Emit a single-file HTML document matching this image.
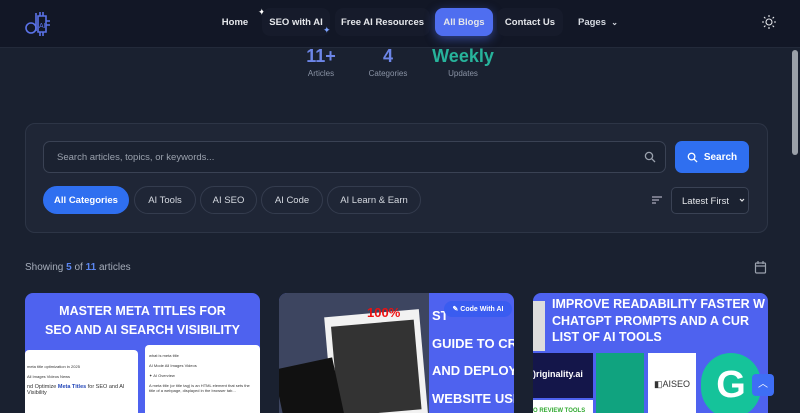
<!DOCTYPE html>
<html><head><meta charset="utf-8"><style>
*{box-sizing:border-box;margin:0;padding:0}
html,body{overflow:hidden}
body{width:800px;height:413px;background:#1a2130;font-family:"Liberation Sans",sans-serif;color:#e5e7eb;position:relative}
.hdr{position:absolute;left:0;top:0;width:800px;height:48px;background:#121726;border-bottom:1px solid #232a3a}
.nav{position:absolute;top:8px;height:28px;font-size:9.5px;font-weight:bold;color:#e5e7eb;display:flex;align-items:center;justify-content:center;border-radius:8px;white-space:nowrap}
.stat{position:absolute;text-align:center;font-size:8px;color:#8a93a5}
.stat b{display:block;font-size:18px;line-height:18px;margin-bottom:4px}
.panel{position:absolute;left:25px;top:123px;width:743px;height:110px;background:#1f2636;border:1px solid #2d3546;border-radius:10px}
.chip{position:absolute;top:186px;height:28px;border:1px solid #343c4e;border-radius:14px;font-size:9.5px;color:#d5d9e0;display:flex;align-items:center;justify-content:center}
.card{position:absolute;top:293px;width:235px;height:120px;background:#4e62ef;border-radius:8px 8px 0 0;overflow:hidden}
.ct{color:#fff;font-weight:bold;font-size:12px;line-height:17px;white-space:nowrap}
</style></head><body>
<div class="hdr"></div>
<svg style="position:absolute;left:24px;top:8px" width="30" height="30" viewBox="0 0 30 30" fill="none" stroke="#5b73e8" stroke-width="1.6"><circle cx="7" cy="20" r="5"/><path d="M12 23V5M14 8h8v16h-8zM16 4v4M19 4v4M16 24v4M19 24v4M22 13h4M22 17h4"/><text x="15" y="20" font-size="7" fill="#5b73e8" stroke="none" font-family="Liberation Sans">AI</text></svg>
<div class="nav" style="left:212px;width:46px">Home</div>
<div style="position:absolute;left:258px;top:7px;color:#fff;font-size:9px">✦</div>
<div class="nav" style="left:262px;width:68px;background:#161b2b">SEO with AI</div>
<div style="position:absolute;left:323px;top:25px;color:#7da2ff;font-size:9px">✦</div>
<div class="nav" style="left:335px;width:95px;background:#161b2b">Free AI Resources</div>
<div class="nav" style="left:435px;width:58px;background:#4f6ef0;box-shadow:0 3px 10px rgba(79,110,240,.5)">All Blogs</div>
<div class="nav" style="left:497px;width:66px;background:#161b2b">Contact Us</div>
<div class="nav" style="left:568px;width:60px;color:#d5d9e0">Pages &nbsp;<span style="font-size:8px">⌄</span></div>
<svg style="position:absolute;left:762px;top:15px" width="14" height="14" viewBox="0 0 14 14" stroke="#e5e7eb" stroke-width="1.1" fill="none"><circle cx="7" cy="7" r="3"/><path d="M7 0v2M7 12v2M0 7h2M12 7h2M2 2l1.4 1.4M10.6 10.6L12 12M2 12l1.4-1.4M10.6 3.4L12 2"/></svg>
<div class="stat" style="left:300px;width:42px;top:47px"><b style="color:#6d86e8">11+</b>Articles</div>
<div class="stat" style="left:362px;width:52px;top:47px"><b style="color:#6d86e8">4</b>Categories</div>
<div class="stat" style="left:428px;width:70px;top:47px"><b style="color:#27b39b">Weekly</b>Updates</div>
<div style="position:absolute;right:2px;top:50px;width:6px;height:105px;background:#9aa0a8;border-radius:3px"></div>
<div class="panel"></div>
<div style="position:absolute;left:43px;top:141px;width:623px;height:32px;border:1px solid #3a4254;border-radius:7px;background:#1b2231;font-size:9.5px;color:#9aa1ad;padding:10px 13px">Search articles, topics, or keywords...</div>
<svg style="position:absolute;left:644px;top:151px" width="12" height="12" viewBox="0 0 12 12" fill="none" stroke="#9aa1ad" stroke-width="1.3"><circle cx="5" cy="5" r="3.6"/><path d="M7.7 7.7L11 11"/></svg>
<div style="position:absolute;left:675px;top:141px;width:74px;height:32px;background:#2f6ff0;border-radius:7px;color:#fff;font-size:10px;font-weight:bold;display:flex;align-items:center;justify-content:center">
<svg width="11" height="11" viewBox="0 0 12 12" fill="none" stroke="#fff" stroke-width="1.4" style="margin-right:6px"><circle cx="5" cy="5" r="3.6"/><path d="M7.7 7.7L11 11"/></svg>Search</div>
<div class="chip" style="left:43px;width:86px;background:#2f6ff0;border-color:#2f6ff0;color:#fff;font-weight:bold">All Categories</div>
<div class="chip" style="left:134px;width:62px">AI Tools</div>
<div class="chip" style="left:200px;width:57px">AI SEO</div>
<div class="chip" style="left:261px;width:62px">AI Code</div>
<div class="chip" style="left:327px;width:94px">AI Learn &amp; Earn</div>
<svg style="position:absolute;left:651px;top:195px" width="12" height="10" stroke="#aab" stroke-width="1.2"><path d="M1 2h10M1 5h7M1 8h4"/></svg>
<div style="position:absolute;left:671px;top:187px;width:78px;height:27px;border:1px solid #3a4254;border-radius:5px;font-size:9.5px;color:#e5e7eb;padding:8px 10px;background:#1b2231;white-space:nowrap">Latest First</div>
<svg style="position:absolute;left:739px;top:198px" width="6" height="5" stroke="#e5e7eb" stroke-width="1.2" fill="none"><path d="M1 1l2 2 2-2"/></svg>
<div style="position:absolute;left:25px;top:262px;font-size:10px;color:#a6adba">Showing <b style="color:#5b86f0">5</b> of <b style="color:#5b86f0">11</b> articles</div>
<svg style="position:absolute;left:754px;top:260px" width="13" height="14" fill="none" stroke="#9aa1ad" stroke-width="1.2"><rect x="1.5" y="3" width="10" height="10" rx="1"/><path d="M1.5 6h10M4 1v3M9 1v3"/></svg>
<div class="card" style="left:25px">
<div class="ct" style="text-align:center;margin-top:9px;font-size:12.5px;line-height:19px">MASTER META TITLES FOR<br>SEO AND AI SEARCH VISIBILITY</div>
<div style="position:absolute;left:0;top:57px;width:113px;height:80px;background:#fff;border-radius:4px;font-size:4px;color:#333;padding:14px 2px">meta title optimization in 2025<br><br>All Images Videos News<br><br><span style="font-size:5.5px">nd Optimize <b style="color:#2346b8">Meta Titles</b> for SEO and AI Visibility</span></div>
<div style="position:absolute;left:120px;top:52px;width:115px;height:80px;background:#fff;border-radius:4px;font-size:4px;color:#333;padding:8px 4px">what is meta title<br><br>AI Mode All Images Videos<br><br>✦ AI Overview<br><br>A meta title (or title tag) is an HTML element that sets the title of a webpage, displayed in the browser tab...</div>
</div>
<div class="card" style="left:279px">
<div style="position:absolute;left:0;top:0;width:150px;height:130px;background:#3d4560"></div>
<div style="position:absolute;left:50px;top:20px;width:95px;height:115px;background:#f2f2f2;transform:rotate(-5deg)"><div style="margin:10px 6px;height:90px;background:#333"></div></div>
<div style="position:absolute;left:0;top:70px;width:60px;height:60px;background:#111;transform:rotate(-12deg)"></div>
<div style="position:absolute;left:88px;top:12px;color:#e11;font-weight:bold;font-size:13px">100%</div>
<div class="ct" style="position:absolute;left:153px;top:9px;font-size:13px;line-height:27.5px">ST<br>GUIDE TO CR<br>AND DEPLOY<br>WEBSITE USI<br>CHATGPT FO<br>FREE (HTML)</div>
<div style="position:absolute;left:165px;top:8px;width:68px;height:16px;background:#3a5cf0;border-radius:8px;color:#fff;font-size:7px;font-weight:bold;display:flex;align-items:center;justify-content:center">✎ Code With AI</div>
</div>
<div class="card" style="left:533px">
<div style="position:absolute;left:0;top:8px;width:12px;height:50px;background:#ddd"></div>
<div class="ct" style="position:absolute;left:19px;top:3px;font-size:12.5px;line-height:16.5px">IMPROVE READABILITY FASTER W<br>CHATGPT PROMPTS AND A CUR<br>LIST OF AI TOOLS</div>
<div style="position:absolute;left:0;top:60px;width:60px;height:45px;background:#14164a;color:#fff;font-size:9px;font-weight:bold;padding-top:16px;white-space:nowrap;overflow:hidden">)riginality.ai</div>
<div style="position:absolute;left:0;top:107px;width:60px;height:30px;background:#fff;color:#3a3;font-size:6px;font-weight:bold;padding-top:8px;white-space:nowrap;overflow:hidden">O REVIEW TOOLS</div>
<div style="position:absolute;left:63px;top:60px;width:48px;height:65px;background:#10a37f"></div>
<div style="position:absolute;left:115px;top:60px;width:48px;height:65px;background:#fff;color:#333;font-size:9px;padding-top:26px;text-align:center">◧AISEO</div>
<div style="position:absolute;left:168px;top:60px;width:60px;height:65px;background:#15c39a;border-radius:30px;color:#fff;font-size:38px;text-align:center;line-height:65px;font-weight:bold">G</div>
</div>
<div style="position:absolute;left:752px;top:374px;width:22px;height:22px;background:#3e6ef5;border-radius:4px;color:#fff;font-size:10px;text-align:center;line-height:22px">︿</div>
</body></html>
